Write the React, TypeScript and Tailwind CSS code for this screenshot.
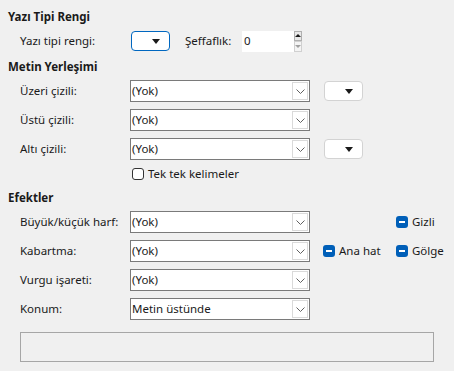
import React from 'react';

const FONT = { fontFamily: '"Noto Sans", "Open Sans", sans-serif' };

function Chevron() {
  return (
    <svg width="9" height="5" viewBox="0 0 9 5" className="text-[#606060]">
      <path d="M0.5 0.5 L4.5 4.5 L8.5 0.5" fill="none" stroke="currentColor" strokeWidth="1" />
    </svg>
  );
}

function Combo({ value }: { value: string }) {
  return (
    <div className="flex h-[22px] w-[180px] items-stretch border border-[#7a7a7a] bg-white">
      <div className="flex flex-1 items-center pl-[1px] text-[#1a1a1a]">{value}</div>
      <div className="m-[1px] flex w-[16px] items-center justify-center border border-[#dadada] bg-white">
        <Chevron />
      </div>
    </div>
  );
}

function ColorButton({ focused = false }: { focused?: boolean }) {
  return (
    <div
      className={
        focused
          ? 'flex h-[20px] w-[39px] items-center justify-end rounded-[4px] border border-[#0067c0] bg-white pr-[9px]'
          : 'flex h-[20px] w-[39px] items-center justify-end rounded-[4px] border border-[#d3d3d3] bg-white pr-[9px]'
      }
    >
      <svg width="8" height="5" viewBox="0 0 8 5">
        <path d="M0 0 H8 L4 5 Z" fill="#1a1a1a" />
      </svg>
    </div>
  );
}

function MixedCheck({ label }: { label: string }) {
  return (
    <div className="flex items-center gap-[4px]">
      <div className="flex h-[12px] w-[12px] items-center justify-center rounded-[3px] bg-[#005fb8]">
        <div className="h-[1.5px] w-[6px] bg-white" />
      </div>
      <span>{label}</span>
    </div>
  );
}

function Heading({ children, className = '' }: { children: React.ReactNode; className?: string }) {
  return <div className={'flex h-[16px] items-center font-bold ' + className}>{children}</div>;
}

function Row({ label, children, className = '' }: { label: string; children: React.ReactNode; className?: string }) {
  return (
    <div className={'flex h-[22px] items-center pl-[12px] ' + className}>
      <div className="w-[110px] shrink-0">{label}</div>
      {children}
    </div>
  );
}

export default function App() {
  return (
    <div
      className="h-[371px] w-[454px] overflow-hidden bg-[#f0f0f0] px-[8px] pt-[9px] text-[11.5px] text-[#1a1a1a]"
      style={FONT}
    >
      <Heading>Yazı Tipi Rengi</Heading>

      <div className="mt-[6px] flex h-[20px] items-center pl-[12px]">
        <div className="w-[111px] shrink-0">Yazı tipi rengi:</div>
        <ColorButton focused />
        <div className="ml-[15px] w-[57px]">Şeffaflık:</div>
        <div className="flex h-[21px] w-[60px] items-stretch bg-white">
          <div className="flex flex-1 items-center pl-[2px]">0</div>
          <div className="flex w-[8px] flex-col bg-[#f0f0f0]">
            <div className="flex flex-1 items-center justify-center border border-[#b0b0b0] bg-[#e8e8e8]">
              <svg width="6" height="3" viewBox="0 0 6 3">
                <path d="M0 3 H6 L3 0 Z" fill="#1a1a1a" />
              </svg>
            </div>
            <div className="flex flex-1 items-center justify-center border border-[#d0d0d0] bg-[#f4f4f4]">
              <svg width="6" height="3" viewBox="0 0 6 3">
                <path d="M0 0 H6 L3 3 Z" fill="#a0a0a0" />
              </svg>
            </div>
          </div>
        </div>
      </div>

      <Heading className="mt-[8px]">Metin Yerleşimi</Heading>

      <Row label="Üzeri çizili:" className="mt-[5px]">
        <Combo value="(Yok)" />
        <div className="ml-[14px]">
          <ColorButton />
        </div>
      </Row>
      <Row label="Üstü çizili:" className="mt-[7px]">
        <Combo value="(Yok)" />
      </Row>
      <Row label="Altı çizili:" className="mt-[7px]">
        <Combo value="(Yok)" />
        <div className="ml-[14px]">
          <ColorButton />
        </div>
      </Row>
      <div className="mt-[7px] flex h-[14px] items-center gap-[4px] pl-[124px]">
        <div className="h-[12px] w-[12px] rounded-[3px] border border-[#333] bg-white" />
        <span>Tek tek kelimeler</span>
      </div>

      <Heading className="mt-[9px]">Efektler</Heading>

      <Row label="Büyük/küçük harf:" className="mt-[5px]">
        <Combo value="(Yok)" />
        <div className="ml-[86px]">
          <MixedCheck label="Gizli" />
        </div>
      </Row>
      <Row label="Kabartma:" className="mt-[7px]">
        <Combo value="(Yok)" />
        <div className="ml-[13px] w-[73px]">
          <MixedCheck label="Ana hat" />
        </div>
        <MixedCheck label="Gölge" />
      </Row>
      <Row label="Vurgu işareti:" className="mt-[7px]">
        <Combo value="(Yok)" />
      </Row>
      <Row label="Konum:" className="mt-[7px]">
        <Combo value="Metin üstünde" />
      </Row>

      <div className="ml-[12px] mt-[12px] h-[30px] w-[414px] border border-[#a6a6a6] bg-[#f0f0f0]" />
    </div>
  );
}
